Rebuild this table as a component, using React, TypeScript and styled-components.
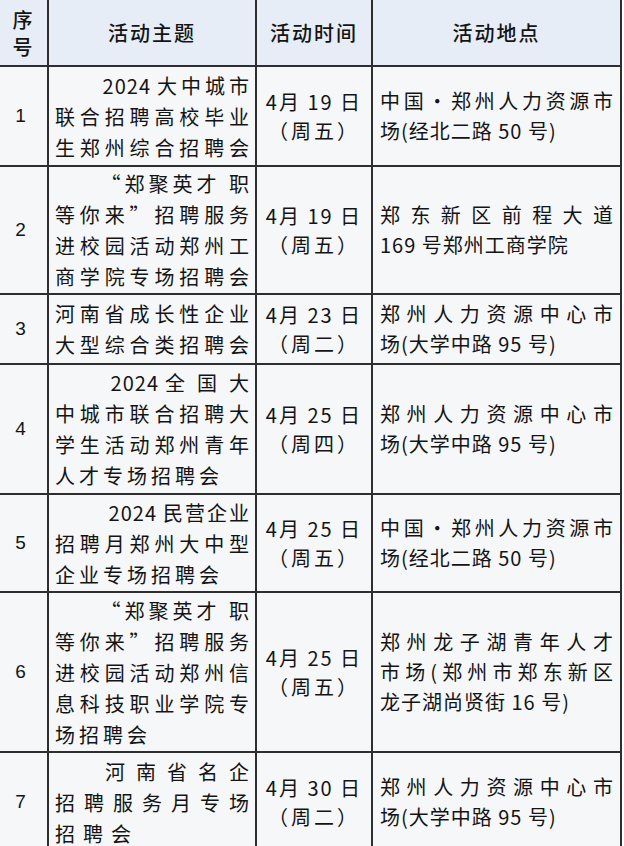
import React from "react";
import styled, { createGlobalStyle } from "styled-components";

const Global = createGlobalStyle`
  html, body { margin: 0; padding: 0; background: #ffffff; }
  body {
    font-family: "Noto Sans CJK SC", "Noto Sans", sans-serif;
    color: #141414;
    -webkit-font-smoothing: antialiased;
  }
`;

const COLS = "49px 208px 116px 249px";

const Table = styled.div`
  display: flex;
  flex-direction: column;
  width: 622px;
  background: #f6f7f9;
`;

const Row = styled.div<{ $h: number; $head?: boolean }>`
  display: grid;
  grid-template-columns: ${COLS};
  height: ${(p) => p.$h}px;
  background: ${(p) => (p.$head ? "#e6edf6" : "#f6f7f9")};
`;

const Cell = styled.div<{ $align?: "center" | "stretch"; $pl?: number; $pr?: number }>`
  box-sizing: border-box;
  border-right: 2px solid #2e2e2e;
  border-bottom: 2px solid #2e2e2e;
  display: flex;
  flex-direction: column;
  justify-content: center;
  align-items: ${(p) => (p.$align === "center" ? "center" : "stretch")};
  padding-left: ${(p) => p.$pl ?? 0}px;
  padding-right: ${(p) => p.$pr ?? 0}px;
  overflow: hidden;
`;

const HeadText = styled.div<{ $lh?: number }>`
  font-size: 20px;
  line-height: ${(p) => p.$lh ?? 30}px;
  letter-spacing: 2px;
  text-align: center;
  font-weight: 500;
`;

const NumText = styled.div`
  font-size: 19px;
  line-height: 30px;
  font-family: "Liberation Sans", "Noto Sans", sans-serif;
  text-align: center;
  padding-right: 6px;
`;

const Num = styled.span`
  letter-spacing: 1px;
  margin-right: 6px;
`;

const Last = styled.span`
  letter-spacing: 0;
`;

type Align = "r" | "j" | "l" | "c";

const alignOf = (a: Align) =>
  a === "r" ? "right" : a === "l" ? "left" : a === "c" ? "center" : "justify";

const Line = styled.div<{ $a: Align; $s: number; $lh: number }>`
  font-size: 20px;
  line-height: ${(p) => p.$lh}px;
  white-space: nowrap;
  letter-spacing: ${(p) => p.$s}px;
  text-align: ${(p) => alignOf(p.$a)};
  text-align-last: ${(p) => alignOf(p.$a)};
  text-justify: inter-character;
`;

type L = { t: string; a: Align; s?: number; p?: string };

type Item = {
  no: string;
  h: number;
  theme: L[];
  date: string;
  week: string;
  place: L[];
};

const placeA: L[] = [
  { t: "中国·郑州人力资源市", a: "j" },
  { t: "场(经北二路 50 号)", a: "l", s: 1 },
];
const placeB: L[] = [
  { t: "郑州人力资源中心市", a: "j" },
  { t: "场(大学中路 95 号)", a: "l", s: 1 },
];

const items: Item[] = [
  {
    no: "1",
    h: 100,
    theme: [
      { p: "2024", t: "大中城市", a: "r", s: 4 },
      { t: "联合招聘高校毕业", a: "j" },
      { t: "生郑州综合招聘会", a: "j" },
    ],
    date: "4月 19 日",
    week: "（周五）",
    place: placeA,
  },
  {
    no: "2",
    h: 128,
    theme: [
      { t: "“郑聚英才 职", a: "r", s: 4 },
      { t: "等你来”招聘服务", a: "j" },
      { t: "进校园活动郑州工", a: "j" },
      { t: "商学院专场招聘会", a: "j" },
    ],
    date: "4月 19 日",
    week: "（周五）",
    place: [
      { t: "郑东新区前程大道", a: "j" },
      { t: "169 号郑州工商学院", a: "l", s: 1 },
    ],
  },
  {
    no: "3",
    h: 70,
    theme: [
      { t: "河南省成长性企业", a: "j" },
      { t: "大型综合类招聘会", a: "j" },
    ],
    date: "4月 23 日",
    week: "（周二）",
    place: placeB,
  },
  {
    no: "4",
    h: 130,
    theme: [
      { p: "2024", t: "全国大", a: "r", s: 12 },
      { t: "中城市联合招聘大", a: "j" },
      { t: "学生活动郑州青年", a: "j" },
      { t: "人才专场招聘会", a: "l", s: 4 },
    ],
    date: "4月 25 日",
    week: "（周四）",
    place: placeB,
  },
  {
    no: "5",
    h: 98,
    theme: [
      { p: "2024", t: "民营企业", a: "r", s: 2 },
      { t: "招聘月郑州大中型", a: "j" },
      { t: "企业专场招聘会", a: "l", s: 4 },
    ],
    date: "4月 25 日",
    week: "（周五）",
    place: placeA,
  },
  {
    no: "6",
    h: 160,
    theme: [
      { t: "“郑聚英才 职", a: "r", s: 4 },
      { t: "等你来”招聘服务", a: "j" },
      { t: "进校园活动郑州信", a: "j" },
      { t: "息科技职业学院专", a: "j" },
      { t: "场招聘会", a: "l", s: 4 },
    ],
    date: "4月 25 日",
    week: "（周五）",
    place: [
      { t: "郑州龙子湖青年人才", a: "j" },
      { t: "市场(郑州市郑东新区", a: "j" },
      { t: "龙子湖尚贤街 16 号)", a: "l", s: 1 },
    ],
  },
  {
    no: "7",
    h: 100,
    theme: [
      { t: "河南省名企", a: "r", s: 11 },
      { t: "招聘服务月专场", a: "j" },
      { t: "招聘会", a: "l", s: 8 },
    ],
    date: "4月 30 日",
    week: "（周二）",
    place: placeB,
  },
];

const renderLines = (lines: L[], lh: number) =>
  lines.map((l, i) => (
    <Line key={i} $a={l.a} $s={l.s ?? 0} $lh={lh}>
      {l.p && <Num>{l.p}</Num>}
      {l.a === "r" ? (
        <>
          {l.t.slice(0, -1)}
          <Last>{l.t.slice(-1)}</Last>
        </>
      ) : (
        l.t
      )}
    </Line>
  ));

export default function App() {
  return (
    <>
      <Global />
      <Table>
        <Row $h={67} $head>
          <Cell $align="center">
            <HeadText $lh={27}>序</HeadText>
            <HeadText $lh={27}>号</HeadText>
          </Cell>
          <Cell $align="center">
            <HeadText>活动主题</HeadText>
          </Cell>
          <Cell $align="center">
            <HeadText>活动时间</HeadText>
          </Cell>
          <Cell $align="center">
            <HeadText>活动地点</HeadText>
          </Cell>
        </Row>
        {items.map((it) => (
          <Row key={it.no} $h={it.h}>
            <Cell $align="center">
              <NumText>{it.no}</NumText>
            </Cell>
            <Cell $pl={6} $pr={6}>
              {renderLines(it.theme, 31)}
            </Cell>
            <Cell $pl={4} $pr={4}>
              <Line $a="c" $s={2} $lh={29}>
                {it.date}
              </Line>
              <Line $a="c" $s={3} $lh={29}>
                {it.week}
              </Line>
            </Cell>
            <Cell $pl={7} $pr={7}>
              {renderLines(it.place, 30)}
            </Cell>
          </Row>
        ))}
      </Table>
    </>
  );
}
